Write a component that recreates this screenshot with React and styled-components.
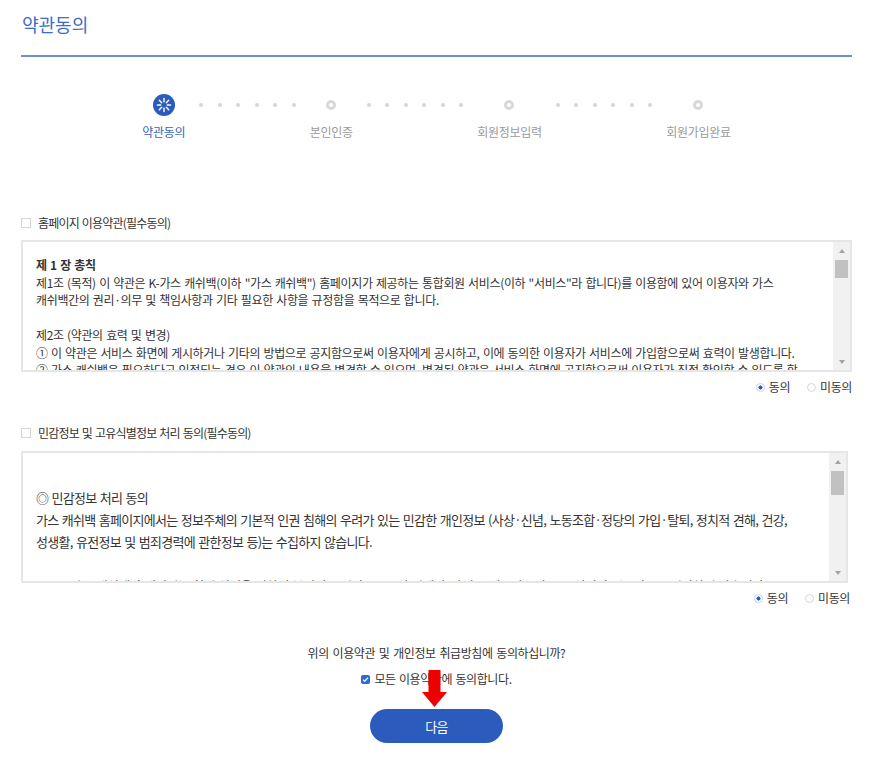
import React from 'react'
import styled, { createGlobalStyle } from 'styled-components'

const GlobalStyle = createGlobalStyle`
  html, body {
    margin: 0;
    padding: 0;
    background: #fff;
  }
  body {
    font-family: "Noto Sans CJK KR", "Noto Sans", sans-serif;
    color: #333;
  }
`

const steps = [
  { label: '약관동의', active: true },
  { label: '본인인증' },
  { label: '회원정보입력' },
  { label: '회원가입완료' }
]

const terms1 = [
  { text: '제 1 장 총칙', bold: true },
  { text: '제1조 (목적) 이 약관은 K-가스 캐쉬백(이하 "가스 캐쉬백") 홈페이지가 제공하는 통합회원 서비스(이하 "서비스"라 합니다)를 이용함에 있어 이용자와 가스' },
  { text: '캐쉬백간의 권리·의무 및 책임사항과 기타 필요한 사항을 규정함을 목적으로 합니다.' },
  { text: '' },
  { text: '제2조 (약관의 효력 및 변경)' },
  { text: '① 이 약관은 서비스 화면에 게시하거나 기타의 방법으로 공지함으로써 이용자에게 공시하고, 이에 동의한 이용자가 서비스에 가입함으로써 효력이 발생합니다.' },
  { text: '② 가스 캐쉬백은 필요하다고 인정되는 경우 이 약관의 내용을 변경할 수 있으며, 변경된 약관은 서비스 화면에 공지함으로써 이용자가 직접 확인할 수 있도록 할' },
  { text: '것입니다.' }
]

const terms2 = [
  { text: '' },
  { text: '◎ 민감정보 처리 동의' },
  { text: '가스 캐쉬백 홈페이지에서는 정보주체의 기본적 인권 침해의 우려가 있는 민감한 개인정보 (사상·신념, 노동조합·정당의 가입·탈퇴, 정치적 견해, 건강,' },
  { text: '성생활, 유전정보 및 범죄경력에 관한정보 등)는 수집하지 않습니다.' },
  { text: '' },
  { text: '- 가스 캐쉬백 홈페이지는 회원 식별을 위하여 본인인증 기관으로부터 연계정보(CI)를 제공받으며, 고유식별정보는 별도로 저장하지 않습니다.', indent: true }
]

const Page = styled.div`
  width: 875px;
  box-sizing: border-box;
  padding: 0 23px 24px 21px;
`

const Header = styled.header`
  padding: 12px 0 19px 1px;
  border-bottom: 2px solid #6d8fd2;
`

const Title = styled.h1`
  margin: 0;
  font-size: 18px;
  line-height: 24px;
  font-weight: 400;
  letter-spacing: 0;
  color: #3d6cc4;
`

const StepRow = styled.div`
  display: flex;
  justify-content: center;
  align-items: flex-start;
  margin-top: 37px;
`

const Step = styled.div`
  display: flex;
  flex-direction: column;
  align-items: center;
`

const Marker = styled.div`
  height: 22px;
  display: flex;
  align-items: center;
  justify-content: center;
`

const Ring = styled.span`
  width: 10px;
  height: 10px;
  box-sizing: border-box;
  border-radius: 50%;
  border: 3px solid #d8d8d8;
  background: #fff;
`

const StepLabel = styled.span`
  margin-top: 8px;
  font-size: 12px;
  line-height: 16px;
  letter-spacing: -0.3px;
  white-space: nowrap;
  color: ${(p) => (p.active ? '#3b64b3' : '#9a9a9a')};
`

const Dots = styled.div`
  display: flex;
  align-items: center;
  gap: 14.5px;
  height: 22px;
  margin: 0 14px;
`

const Dot = styled.span`
  width: 4px;
  height: 4px;
  border-radius: 50%;
  background: #d6d6d6;
`

const Section = styled.section`
  margin-top: ${(p) => p.top}px;
`

const AgreeHead = styled.div`
  display: flex;
  align-items: center;
  gap: 7px;
  font-size: 12px;
  line-height: 16px;
  letter-spacing: -0.8px;
  word-spacing: 1px;
  color: #333;
`

const CheckBox = styled.span`
  width: 10px;
  height: 10px;
  box-sizing: border-box;
  border: 1px solid #d5d5d5;
  background: #fff;
`

const TermsBox = styled.div`
  display: flex;
  width: ${(p) => p.width}px;
  height: 132px;
  box-sizing: border-box;
  margin-top: ${(p) => p.top}px;
  border: 2px solid #e6e6e6;
  background: #fff;
`

const TermsText = styled.div`
  flex: 1;
  overflow: hidden;
  padding: ${(p) => p.padTop}px 0 0 13px;
  font-size: ${(p) => p.size}px;
  letter-spacing: ${(p) => p.spacing}px;
  word-spacing: 1px;
  color: #333;
`

const Line = styled.div`
  white-space: nowrap;
  height: ${(p) => p.lh}px;
  line-height: ${(p) => p.lh}px;
  font-weight: ${(p) => (p.bold ? 700 : 400)};
  padding-left: ${(p) => (p.indent ? 27 : 0)}px;
`

const ScrollTrack = styled.div`
  width: 17px;
  display: flex;
  flex-direction: column;
  background: #f1f1f1;
`

const ScrollBtn = styled.div`
  height: 17px;
  display: flex;
  align-items: center;
  justify-content: center;
  &::after {
    content: '';
    border-left: 3.5px solid transparent;
    border-right: 3.5px solid transparent;
    ${(p) =>
      p.down
        ? 'border-top: 4px solid #a3a3a3;'
        : 'border-bottom: 4px solid #a3a3a3;'}
  }
`

const Thumb = styled.div`
  height: ${(p) => p.size}px;
  margin: 1px 2px 0;
  background: #c1c1c1;
`

const TrackSpace = styled.div`
  flex: 1;
`

const RadioRow = styled.div`
  display: flex;
  justify-content: flex-end;
  gap: 17px;
  margin-top: 7px;
  padding-right: ${(p) => p.right || 0}px;
  font-size: 12px;
  line-height: 16px;
  letter-spacing: -0.4px;
  color: #333;
`

const RadioItem = styled.label`
  display: flex;
  align-items: center;
  gap: 4px;
`

const RadioDot = styled.span`
  width: 9px;
  height: 9px;
  box-sizing: border-box;
  border-radius: 50%;
  border: 1px solid ${(p) => (p.checked ? '#c9d4ea' : '#d6d6d6')};
  background: ${(p) =>
    p.checked ? 'radial-gradient(circle, #2a5bbd 0 1.8px, #fff 2.3px)' : '#fff'};
`

const Footer = styled.div`
  position: relative;
  display: flex;
  flex-direction: column;
  align-items: center;
  margin-top: 39px;
`

const Question = styled.p`
  margin: 0;
  font-size: 12px;
  line-height: 16px;
  letter-spacing: -0.4px;
  word-spacing: 1.4px;
  color: #333;
`

const AgreeAll = styled.label`
  display: flex;
  align-items: center;
  gap: 4px;
  margin-top: 10px;
  font-size: 12px;
  line-height: 16px;
  letter-spacing: -0.4px;
  word-spacing: 1px;
  color: #333;
`

const Checked = styled.span`
  width: 9px;
  height: 9px;
  border-radius: 2px;
  background: #2a6ad8;
  display: flex;
  align-items: center;
  justify-content: center;
`

const NextButton = styled.button`
  margin-top: 22px;
  width: 133px;
  height: 34px;
  border: 0;
  border-radius: 17px;
  background: #2a5bbd;
  color: #fff;
  font-family: "Noto Sans CJK KR", sans-serif;
  font-size: 13px;
  letter-spacing: -0.6px;
  cursor: pointer;
`

const Arrow = styled.svg`
  position: absolute;
  top: 25px;
  left: 50%;
  margin-left: -15px;
`

function ActiveIcon() {
  const rays = [0, 45, 90, 135, 180, 225, 270, 315]
  return (
    <svg width="22" height="22" viewBox="0 0 22 22">
      <circle cx="11" cy="11" r="11" fill="#2a5bbd" />
      {rays.map((a) => {
        const r = (a * Math.PI) / 180
        return (
          <line
            key={a}
            x1={11 + Math.cos(r) * 3.3}
            y1={11 + Math.sin(r) * 3.3}
            x2={11 + Math.cos(r) * 6.6}
            y2={11 + Math.sin(r) * 6.6}
            stroke="#fff"
            strokeWidth="1.4"
            strokeLinecap="round"
          />
        )
      })}
    </svg>
  )
}

function Terms({ lines, width, top, padTop, lh, thumb, size, spacing }) {
  return (
    <TermsBox width={width} top={top}>
      <TermsText padTop={padTop} size={size} spacing={spacing}>
        {lines.map((l, i) => (
          <Line key={i} lh={lh} bold={l.bold} indent={l.indent}>
            {l.text}
          </Line>
        ))}
      </TermsText>
      <ScrollTrack>
        <ScrollBtn />
        <Thumb size={thumb} />
        <TrackSpace />
        <ScrollBtn down />
      </ScrollTrack>
    </TermsBox>
  )
}

function Radios({ right }) {
  return (
    <RadioRow right={right}>
      <RadioItem>
        <RadioDot checked />
        동의
      </RadioItem>
      <RadioItem>
        <RadioDot />
        미동의
      </RadioItem>
    </RadioRow>
  )
}

export default function App() {
  return (
    <Page>
      <GlobalStyle />
      <Header>
        <Title>약관동의</Title>
      </Header>

      <StepRow>
        {steps.map((s, i) => (
          <React.Fragment key={s.label}>
            {i > 0 && (
              <Dots>
                {[0, 1, 2, 3, 4, 5].map((d) => (
                  <Dot key={d} />
                ))}
              </Dots>
            )}
            <Step>
              <Marker>{s.active ? <ActiveIcon /> : <Ring />}</Marker>
              <StepLabel active={s.active}>{s.label}</StepLabel>
            </Step>
          </React.Fragment>
        ))}
      </StepRow>

      <Section top={75}>
        <AgreeHead>
          <CheckBox />
          홈페이지 이용약관(필수동의)
        </AgreeHead>
        <Terms
          lines={terms1}
          width={831}
          top={9}
          padTop={14}
          lh={17.5}
          thumb={18}
          size={12}
          spacing={-0.35}
        />
        <Radios />
      </Section>

      <Section top={30}>
        <AgreeHead>
          <CheckBox />
          민감정보 및 고유식별정보 처리 동의(필수동의)
        </AgreeHead>
        <Terms
          lines={terms2}
          width={827}
          top={10}
          padTop={12}
          lh={22}
          thumb={24}
          size={13}
          spacing={-0.7}
        />
        <Radios right={2} />
      </Section>

      <Footer>
        <Question>위의 이용약관 및 개인정보 취급방침에 동의하십니까?</Question>
        <AgreeAll>
          <Checked>
            <svg width="7" height="7" viewBox="0 0 7 7">
              <path d="M1 3.6 L2.8 5.3 L6 1.6" fill="none" stroke="#fff" strokeWidth="1.3" />
            </svg>
          </Checked>
          모든 이용약관에 동의합니다.
        </AgreeAll>
        <NextButton>다음</NextButton>
        <Arrow width="25" height="37" viewBox="0 0 25 37">
          <rect x="6.5" y="0" width="12" height="23" fill="#ee0000" />
          <polygon points="0,22 25,22 12.5,37" fill="#ee0000" />
        </Arrow>
      </Footer>
    </Page>
  )
}
